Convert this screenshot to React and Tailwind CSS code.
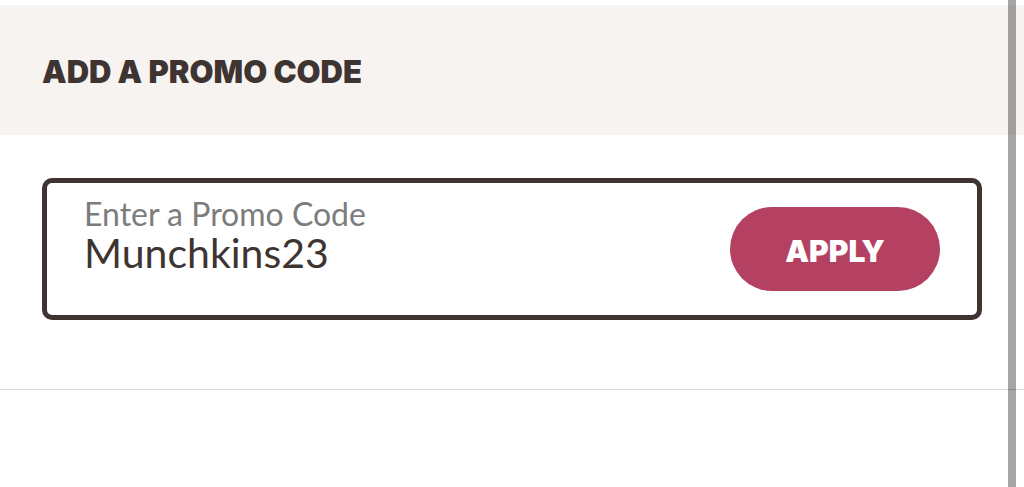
import { useState } from "react";

function PromoHeader() {
    return (
        <header className="bg-[#f7f3f0] px-[42px] pt-12 pb-11">
            <h2 className="font-['Inter',sans-serif] text-[31px] leading-[38px] font-black uppercase text-[#3e3532]">
                Add a Promo Code
            </h2>
        </header>
    );
}

function PromoForm() {
    const [code, setCode] = useState("Munchkins23");

    return (
        <form
            className="px-[42px] pt-[43px] pb-[69px] border-b border-[#d5d5d5]"
            onSubmit={(e) => e.preventDefault()}
        >
            <div className="flex items-center justify-between gap-6 rounded-[10px] border-[5px] border-[#3e3532] px-[37px] py-3">
                <div className="flex min-w-0 flex-1 flex-col pb-8">
                    <label
                        htmlFor="promo-code"
                        className="text-[32px] leading-[38px] text-[#7c7c7c]"
                    >
                        Enter a Promo Code
                    </label>
                    <input
                        id="promo-code"
                        type="text"
                        value={code}
                        onChange={(e) => setCode(e.target.value)}
                        className="h-[38px] w-full bg-transparent text-[41px] leading-[38px] text-[#3e3532] outline-none"
                    />
                </div>
                <button
                    type="submit"
                    className="w-[210px] shrink-0 cursor-pointer rounded-[42px] bg-[#b44162] pt-[25px] pb-[21px] font-['Inter',sans-serif] text-[30px] leading-[38px] font-black uppercase text-white"
                >
                    Apply
                </button>
            </div>
        </form>
    );
}

function App() {
    return (
        <div className="relative min-h-screen bg-white pt-[5px] font-['Lato',sans-serif]">
            <PromoHeader />
            <PromoForm />
            {/* Scroll thumb floats over the page */}
            <div className="absolute inset-y-0 right-2 w-2 bg-black/35" />
        </div>
    );
}

export default App;
